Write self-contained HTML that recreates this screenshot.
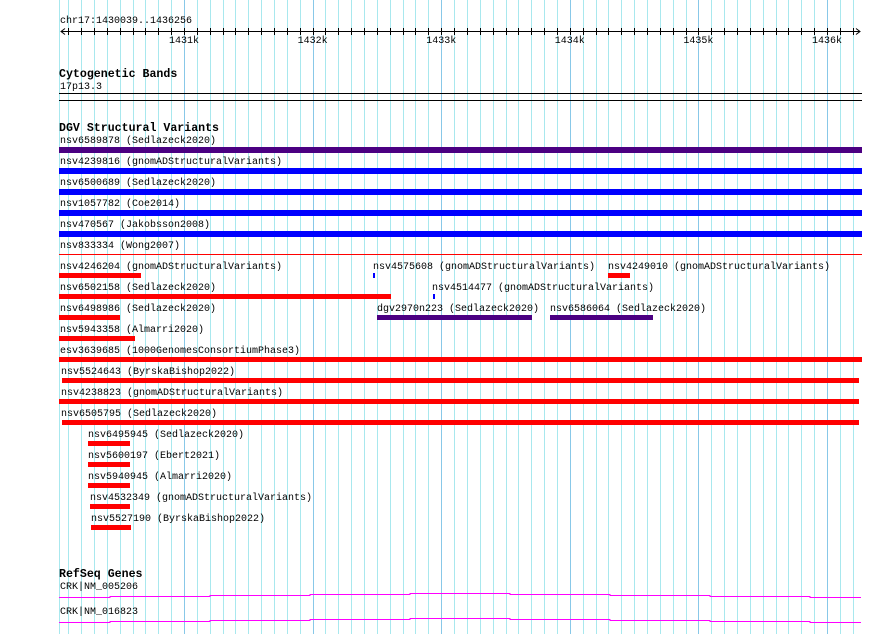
<!DOCTYPE html>
<html><head><meta charset="utf-8"><style>
html,body{margin:0;padding:0;background:#fff;width:890px;height:634px;overflow:hidden}
svg{display:block}
text{font-family:"Liberation Mono",monospace;font-size:10px;fill:#000}
.t{font-weight:bold;font-size:11.6px}
</style></head><body>
<svg id="s" width="890" height="634" xmlns="http://www.w3.org/2000/svg">
<g id="grid"></g>
<g id="ticks" stroke="#000" stroke-width="1"></g>
<line x1="61" y1="31.5" x2="860" y2="31.5" stroke="#000"/>
<path d="M65 28.5 L61 31.5 L65 34.5 M856 28.5 L860 31.5 L856 34.5" fill="none" stroke="#000"/>
<g transform="translate(0,-1)">
<text x="60" y="24">chr17:1430039..1436256</text>
<text x="184" y="44" text-anchor="middle">1431k</text>
<text x="312.6" y="44" text-anchor="middle">1432k</text>
<text x="441.2" y="44" text-anchor="middle">1433k</text>
<text x="569.8" y="44" text-anchor="middle">1434k</text>
<text x="698.4" y="44" text-anchor="middle">1435k</text>
<text x="827" y="44" text-anchor="middle">1436k</text>
<text class="t" x="59" y="78">Cytogenetic Bands</text>
<text x="60" y="90">17p13.3</text>
<text class="t" x="59" y="132">DGV Structural Variants</text>
<text x="60" y="144">nsv6589878 (Sedlazeck2020)</text>
<text x="60" y="165">nsv4239816 (gnomADStructuralVariants)</text>
<text x="60" y="186">nsv6500689 (Sedlazeck2020)</text>
<text x="60" y="207">nsv1057782 (Coe2014)</text>
<text x="60" y="228">nsv470567 (Jakobsson2008)</text>
<text x="60" y="249">nsv833334 (Wong2007)</text>
<text x="60" y="270">nsv4246204 (gnomADStructuralVariants)</text>
<text x="373" y="270">nsv4575608 (gnomADStructuralVariants)</text>
<text x="608" y="270">nsv4249010 (gnomADStructuralVariants)</text>
<text x="60" y="291">nsv6502158 (Sedlazeck2020)</text>
<text x="432" y="291">nsv4514477 (gnomADStructuralVariants)</text>
<text x="60" y="312">nsv6498986 (Sedlazeck2020)</text>
<text x="377" y="312">dgv2970n223 (Sedlazeck2020)</text>
<text x="550" y="312">nsv6586064 (Sedlazeck2020)</text>
<text x="60" y="333">nsv5943358 (Almarri2020)</text>
<text x="60" y="354">esv3639685 (1000GenomesConsortiumPhase3)</text>
<text x="61" y="375">nsv5524643 (ByrskaBishop2022)</text>
<text x="61" y="396">nsv4238823 (gnomADStructuralVariants)</text>
<text x="61" y="417">nsv6505795 (Sedlazeck2020)</text>
<text x="88" y="438">nsv6495945 (Sedlazeck2020)</text>
<text x="88" y="459">nsv5600197 (Ebert2021)</text>
<text x="88" y="480">nsv5940945 (Almarri2020)</text>
<text x="90" y="501">nsv4532349 (gnomADStructuralVariants)</text>
<text x="91" y="522">nsv5527190 (ByrskaBishop2022)</text>
<text class="t" x="59" y="578">RefSeq Genes</text>
<text x="60" y="590">CRK|NM_005206</text>
<text x="60" y="615">CRK|NM_016823</text>
</g>
<rect x="59" y="93" width="803" height="1" fill="#000"/>
<rect x="59" y="100" width="803" height="1" fill="#000"/>
<rect x="59" y="147" width="803" height="6" fill="#4b0082"/>
<rect x="59" y="168" width="803" height="6" fill="#0000ff"/>
<rect x="59" y="189" width="803" height="6" fill="#0000ff"/>
<rect x="59" y="210" width="803" height="6" fill="#0000ff"/>
<rect x="59" y="231" width="803" height="6" fill="#0000ff"/>
<rect x="59" y="254" width="803" height="1" fill="#ff0000"/>
<g fill="#ff0000">
<rect x="59" y="273" width="82" height="5"/>
<rect x="59" y="294" width="332" height="5"/>
<rect x="59" y="315" width="61" height="5"/>
<rect x="59" y="336" width="76" height="5"/>
<rect x="608" y="273" width="22" height="5"/>
<rect x="59" y="357" width="803" height="5"/>
<rect x="62" y="378" width="797" height="5"/>
<rect x="59" y="399" width="800" height="5"/>
<rect x="62" y="420" width="797" height="5"/>
<rect x="88" y="441" width="42" height="5"/>
<rect x="88" y="462" width="42" height="5"/>
<rect x="88" y="483" width="42" height="5"/>
<rect x="90" y="504" width="40" height="5"/>
<rect x="91" y="525" width="40" height="5"/>
</g>
<rect x="373" y="273" width="2" height="5" fill="#0000ff"/>
<rect x="433" y="294" width="2" height="5" fill="#0000ff"/>
<rect x="377" y="315" width="155" height="5" fill="#4b0082"/>
<rect x="550" y="315" width="103" height="5" fill="#4b0082"/>
<path d="M59 597.5H110V596.5H210V595.5H310V594.5H410V593.5H510V594.5H610V595.5H710V596.5H810V597.5H861" fill="none" stroke="#ff00ff"/>
<path d="M59 622.5H110V621.5H210V620.5H310V619.5H410V618.5H510V619.5H610V620.5H710V621.5H810V622.5H861" fill="none" stroke="#ff00ff"/>
</svg>
<script>
var g=document.getElementById('grid'),t=document.getElementById('ticks'),ns="http://www.w3.org/2000/svg";
function L(p,x1,y1,x2,y2,c){var l=document.createElementNS(ns,'line');l.setAttribute('x1',x1);l.setAttribute('y1',y1);l.setAttribute('x2',x2);l.setAttribute('y2',y2);if(c)l.setAttribute('stroke',c);p.appendChild(l);}
L(g,59.5,0,59.5,634,'#a8e8ee');
for(var k=-9;k<=52;k++){var x=Math.round(184+12.86*k)+0.5;var maj=(k%10==0);
L(g,x,0,x,634,maj?'#88c8e8':'#a8e8ee');L(t,x,28,x,35);}
</script>
</body></html>
